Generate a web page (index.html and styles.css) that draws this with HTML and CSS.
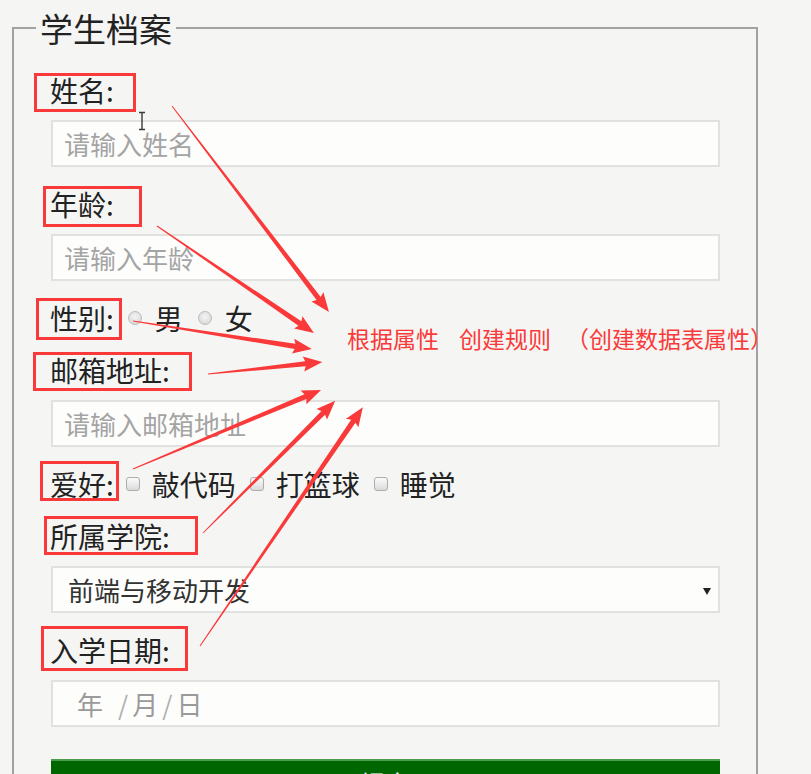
FILE: index.html
```html
<!DOCTYPE html>
<html lang="zh-CN">
<head>
<meta charset="utf-8">
<title>学生档案</title>
<link rel="stylesheet" href="styles.css">
</head>
<body>
<form class="page">
  <fieldset class="card">
    <legend class="card-title">学生档案</legend>
    <div class="card-body">
      <label class="field-label" for="name">姓名:</label>
      <input class="field-input" id="name" type="text" placeholder="请输入姓名">

      <label class="field-label" for="age">年龄:</label>
      <input class="field-input" id="age" type="text" placeholder="请输入年龄">

      <div class="choice-row">
        <span class="row-label row-label-radio">性别:</span>
        <label class="choice choice-radio"><input class="radio" type="radio" name="sex">男</label>
        <label class="choice choice-radio"><input class="radio" type="radio" name="sex">女</label>
      </div>

      <label class="field-label" for="mail">邮箱地址:</label>
      <input class="field-input" id="mail" type="text" placeholder="请输入邮箱地址">

      <div class="choice-row">
        <span class="row-label">爱好:</span>
        <label class="choice"><input class="check" type="checkbox">敲代码</label>
        <label class="choice"><input class="check" type="checkbox">打篮球</label>
        <label class="choice"><input class="check" type="checkbox">睡觉</label>
      </div>

      <label class="field-label" for="college">所属学院:</label>
      <div class="select-wrap">
        <select class="field-select" id="college">
          <option>前端与移动开发</option>
        </select>
      </div>

      <label class="field-label">入学日期:</label>
      <div class="field-input date-input">
        <span class="date-part year">年</span><span class="date-sep">/</span><span class="date-part">月</span><span class="date-sep">/</span><span class="date-part">日</span>
      </div>

      <button class="submit" type="button">提交</button>
    </div>
  </fieldset>
</form>

<div class="annotations">
  <svg class="annotation-canvas" width="811" height="774" viewBox="0 0 811 774">
    <g fill="none" stroke="#fa3a3a" stroke-width="3">
      <rect x="35.5" y="74.5" width="99" height="36"/>
      <rect x="44.5" y="187.5" width="96" height="38"/>
      <rect x="37.5" y="299.5" width="83" height="39"/>
      <rect x="34.5" y="353.5" width="156" height="36"/>
      <rect x="41.5" y="462.5" width="76" height="37"/>
      <rect x="45.5" y="517.5" width="151" height="36"/>
      <rect x="42.5" y="627.5" width="144" height="42"/>
    </g>
    <g fill="#fa3a3a">
      <g transform="translate(172 106) rotate(52.7)"><polygon points="0,-0.5 242,-2.6 240,-7.5 259,0 240,7.5 242,2.6 0,0.5"/></g>
      <g transform="translate(157 226) rotate(34.3)"><polygon points="0,-0.5 173,-2.6 171,-7.5 190,0 171,7.5 173,2.6 0,0.5"/></g>
      <g transform="translate(133 321) rotate(8.9)"><polygon points="0,-0.5 164,-2.6 162,-7.5 181,0 162,7.5 164,2.6 0,0.5"/></g>
      <g transform="translate(208 374) rotate(-6)"><polygon points="0,-0.5 98,-2.6 96,-7.5 115,0 96,7.5 98,2.6 0,0.5"/></g>
      <g transform="translate(133 469) rotate(-22.8)"><polygon points="0,-0.5 187,-2.6 185,-7.5 204,0 185,7.5 187,2.6 0,0.5"/></g>
      <g transform="translate(203 533) rotate(-45)"><polygon points="0,-0.5 170,-2.6 168,-7.5 187,0 168,7.5 170,2.6 0,0.5"/></g>
      <g transform="translate(200 646) rotate(-55.7)"><polygon points="0,-0.5 272,-2.6 270,-7.5 289,0 270,7.5 272,2.6 0,0.5"/></g>
    </g>
    <g stroke="#3a3a3a" stroke-width="1.4" fill="none">
      <path d="M139 112.5h3M142 112.5h3M142 113v16M139 129.5h3M142 129.5h3"/>
    </g>
  </svg>
  <div class="note"><span>根据属性</span><span class="gap1">创建规则</span><span class="gap2">（创建数据表属性）</span></div>
</div>
</body>
</html>
```

FILE: styles.css
```css
* {
  box-sizing: border-box;
}

html,
body {
  margin: 0;
  padding: 0;
}

body {
  width: 811px;
  height: 774px;
  overflow: hidden;
  position: relative;
  background: #f5f6f4;
  color: #222;
  font-family: "Noto Sans CJK SC", "Microsoft YaHei", sans-serif;
}

.page {
  margin: 0;
}

.card {
  margin: 8px 0 0 12px;
  width: 746px;
  min-width: 0;
  padding: 0;
  border: 2px solid #a2a3a1;
}

.card-title {
  margin-left: 22px;
  padding: 0 4px;
  font-size: 33px;
  line-height: 40px;
  color: #222;
}

.card-body {
  display: flex;
  flex-direction: column;
  align-items: stretch;
  padding: 22px 36px 40px 37px;
}

.field-label {
  align-self: flex-start;
  height: 40px;
  line-height: 40px;
  font-size: 28px;
  margin-bottom: 10px;
  margin-left: -1px;
  color: #222;
}

.field-input {
  display: block;
  width: 100%;
  height: 47px;
  margin: 0 0 17px;
  padding: 0 11px;
  border: 2px solid #e1e2e0;
  background: #fdfefc;
  font-family: inherit;
  font-size: 26px;
  color: #333;
  outline: none;
}

.field-input::placeholder {
  color: #a4a4a4;
}

.choice-row {
  display: flex;
  align-items: center;
  height: 40px;
  margin-bottom: 12px;
  margin-left: -1px;
  font-size: 28px;
  line-height: 40px;
}

.row-label {
  margin-right: 12px;
}

.row-label-radio {
  margin-right: 14px;
}

.choice {
  display: flex;
  align-items: center;
  gap: 12px;
  margin-right: 14px;
}

.choice-radio {
  gap: 13px;
  margin-right: 15px;
}

.radio {
  appearance: none;
  -webkit-appearance: none;
  width: 14px;
  height: 14px;
  margin: 0;
  border-radius: 50%;
  border: 1px solid #bcbcbc;
  background: radial-gradient(circle at 50% 40%, #f4f4f4 0%, #e2e2e2 55%, #cfcfcf 100%);
}

.check {
  appearance: none;
  -webkit-appearance: none;
  width: 14px;
  height: 14px;
  margin: 0;
  border-radius: 3px;
  border: 1px solid #adadad;
  background: linear-gradient(#fbfbfb, #dadada);
}

.select-wrap {
  position: relative;
  margin-bottom: 17px;
}

.select-wrap::after {
  content: "";
  position: absolute;
  right: 9px;
  top: 22px;
  border-left: 4px solid transparent;
  border-right: 4px solid transparent;
  border-top: 7px solid #222;
}

.field-select {
  appearance: none;
  -webkit-appearance: none;
  display: block;
  width: 100%;
  height: 47px;
  padding: 0 30px 0 15px;
  border: 2px solid #e1e2e0;
  border-radius: 0;
  background: #fdfefc;
  font-family: inherit;
  font-size: 26px;
  color: #333;
  outline: none;
}

.date-input {
  display: flex;
  align-items: center;
  padding-left: 24px;
  color: #9a9a9a;
}

.date-part.year {
  margin-right: 11px;
}

.date-sep {
  margin: 0 4px;
  color: #b0b0b0;
}

.submit {
  display: block;
  width: 100%;
  height: 46px;
  margin-top: 15px;
  border: 0;
  border-top: 2px solid #4a9e4a;
  background: #006600;
  color: #fff;
  font-family: inherit;
  font-size: 25px;
}

.annotations {
  position: absolute;
  left: 0;
  top: 0;
  width: 811px;
  height: 774px;
  pointer-events: none;
}

.annotation-canvas {
  position: absolute;
  left: 0;
  top: 0;
}

.note {
  position: absolute;
  left: 347px;
  top: 324px;
  white-space: nowrap;
  font-size: 23px;
  line-height: 28px;
  color: #fa3a3a;
}

.gap1 {
  margin-left: 20px;
}

.gap2 {
  margin-left: 15px;
}
```
